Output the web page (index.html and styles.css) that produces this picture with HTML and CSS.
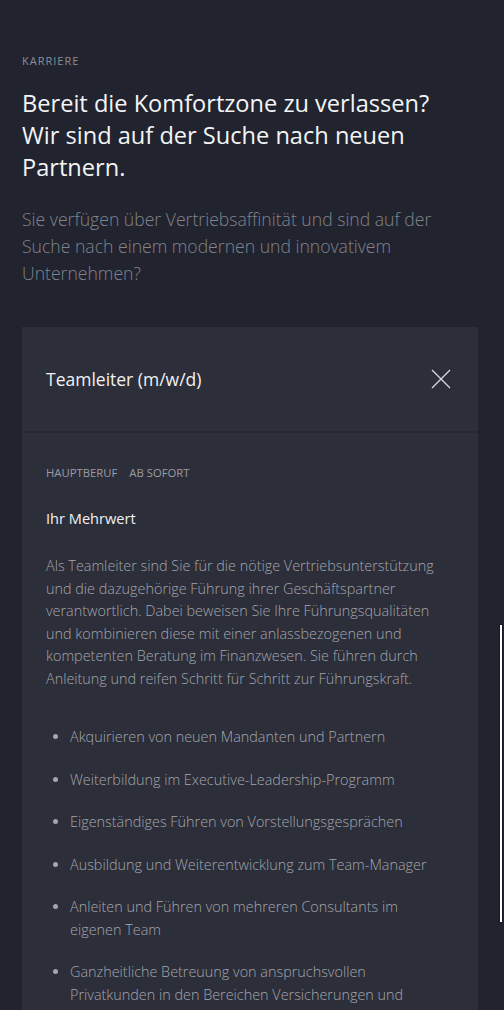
FILE: index.html
```html
<!DOCTYPE html>
<html lang="de">
<head>
    <meta charset="UTF-8">
    <meta name="viewport" content="width=device-width, initial-scale=1.0">
    <title>Karriere</title>
    <link rel="stylesheet" href="styles.css">
</head>
<body>

<section class="careers">
    <p class="eyebrow">Karriere</p>
    <h1>Bereit die Komfortzone zu verlassen? Wir sind auf der Suche nach neuen Partnern.</h1>
    <p class="lead">Sie verfügen über Vertriebsaffinität und sind auf der Suche nach einem modernen und innovativem Unternehmen?</p>

    <div class="job">
        <div class="job-head">
            <h2>Teamleiter (m/w/d)</h2>
            <button class="close" aria-label="Schließen">
                <svg width="20" height="20" viewBox="0 0 20 20">
                    <path d="M1 1 L19 19 M19 1 L1 19" stroke="#d8d9dd" stroke-width="1.3" fill="none"/>
                </svg>
            </button>
        </div>
        <div class="job-body">
            <div class="tags">
                <span>Hauptberuf</span>
                <span>Ab sofort</span>
            </div>
            <h3>Ihr Mehrwert</h3>
            <p>Als Teamleiter sind Sie für die nötige Vertriebsunterstützung und die dazugehörige Führung ihrer Geschäftspartner verantwortlich. Dabei beweisen Sie Ihre Führungsqualitäten und kombinieren diese mit einer anlassbezogenen und kompetenten Beratung im Finanzwesen. Sie führen durch Anleitung und reifen Schritt für Schritt zur Führungskraft.</p>
            <ul>
                <li>Akquirieren von neuen Mandanten und Partnern</li>
                <li>Weiterbildung im Executive-Leadership-Programm</li>
                <li>Eigenständiges Führen von Vorstellungsgesprächen</li>
                <li>Ausbildung und Weiterentwicklung zum Team-Manager</li>
                <li>Anleiten und Führen von mehreren Consultants im eigenen Team</li>
                <li>Ganzheitliche Betreuung von anspruchsvollen Privatkunden in den Bereichen Versicherungen und Finanzierungen</li>
            </ul>
        </div>
    </div>
</section>

<div class="side-tab"></div>

</body>
</html>
```

FILE: styles.css
```css
html {
    overflow: hidden;
}
body {
    font-family: "Open Sans", Arial, sans-serif;
    margin: 0;
    padding: 53px 26px 40px 22px;
    background-color: #21242f;
    color: #f1f1f3;
}
.eyebrow {
    margin: 0;
    font-size: 11px;
    line-height: 16px;
    letter-spacing: 1px;
    text-transform: uppercase;
    color: #8b8e97;
}
h1 {
    max-width: 420px;
    margin: 18px 0 0;
    font-size: 23.6px;
    line-height: 32px;
    font-weight: 400;
    color: #f4f4f6;
}
.lead {
    max-width: 440px;
    margin: 23px 0 0;
    font-size: 17.6px;
    line-height: 27px;
    font-weight: 300;
    color: #80838c;
}
.job {
    margin-top: 40px;
    background-color: #2c2e39;
}
.job-head {
    display: flex;
    align-items: center;
    justify-content: space-between;
    height: 104px;
    padding: 0 27px 0 24px;
    border-bottom: 2px solid #262832;
}
.job-head h2 {
    margin: 0;
    font-size: 17.5px;
    font-weight: 400;
    color: #f1f1f3;
}
.close {
    padding: 0;
    background: none;
    border: none;
    cursor: pointer;
    display: flex;
}
.job-body {
    padding: 32px 34px 0 24px;
}
.tags {
    display: flex;
    gap: 12px;
    font-size: 11.3px;
    line-height: 16px;
    text-transform: uppercase;
    color: #9a9ca5;
}
h3 {
    margin: 26px 0 0;
    font-size: 14.6px;
    line-height: 22px;
    font-weight: 400;
    color: #f1f1f3;
}
.job-body p {
    margin: 26px 0 0;
    font-size: 14.4px;
    line-height: 22.5px;
    font-weight: 300;
    color: #a3a6ae;
}
.job-body ul {
    margin: 36px 0 0;
    padding-left: 24px;
    font-size: 14.4px;
    line-height: 22.5px;
    font-weight: 300;
    color: #a3a6ae;
}
.job-body li {
    margin-bottom: 20px;
}
.side-tab {
    position: fixed;
    left: 499px;
    top: 624px;
    width: 2px;
    height: 297px;
    background-color: #fff;
    border: 1px solid #181a22;
}
```
